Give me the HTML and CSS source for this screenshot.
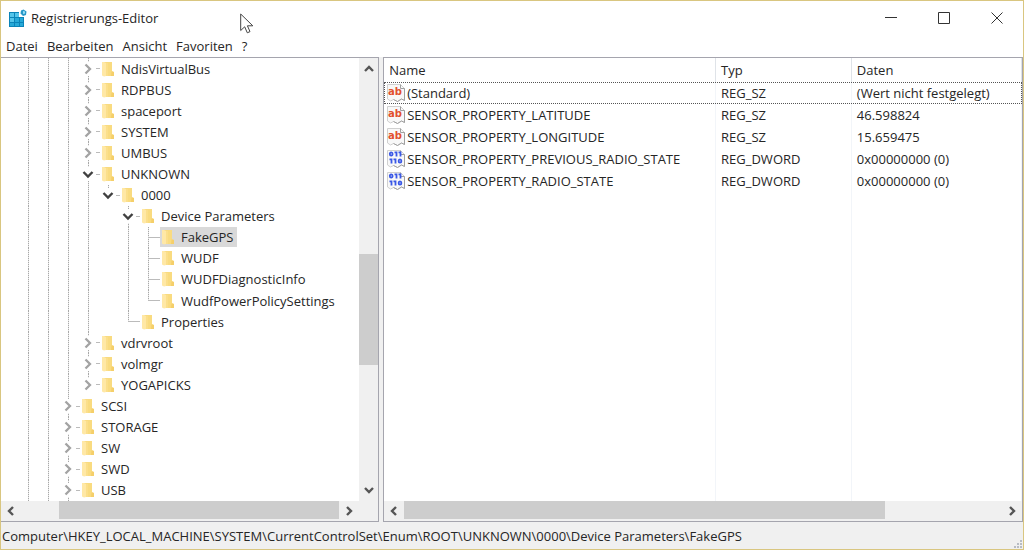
FILE: index.html
```html
<!DOCTYPE html>
<html lang="de">
<head>
<meta charset="utf-8">
<title>Registrierungs-Editor</title>
<meta name="viewport" content="width=device-width, initial-scale=1">
<link rel="stylesheet" href="styles.css">
</head>
<body>
<svg class="sprite" aria-hidden="true">
  <symbol id="folder" viewBox="0 0 12 16">
    <path d="M1 1h9v9l2 1v4H1z" fill="#f9db80"/>
    <path d="M0 1h2l2 1v13l-2 .5-2-1z" fill="#ffe8a6"/>
    <path d="M4 2h2v13H4z" fill="#fbdf8b"/>
    <path d="M9.500 10.500l2.500.500v4H9z" fill="#f5cf6a"/>
  </symbol>
  <symbol id="closed" viewBox="0 0 12 12">
    <path d="M3.500 1.500L8 6l-4.500 4.500" fill="none" stroke="#a3a3a3" stroke-width="2.300"/>
  </symbol>
  <symbol id="open" viewBox="0 0 12 12">
    <path d="M1.500 4L6 8.500 10.500 4" fill="none" stroke="#404040" stroke-width="2.400"/>
  </symbol>
  <symbol id="arrow" viewBox="0 0 12 12">
    <path d="M2 8l4-4 4 4" fill="none" stroke="#555" stroke-width="2.400"/>
  </symbol>
  <symbol id="page" viewBox="0 0 18 18">
    <path d="M.5.500h13l4 4v12l-3-1.500-4 2.500-4-2-3 1.500-3-2z" fill="#f8f8f8" stroke="#d0d0d0"/>
    <path d="M13.500.500v4h4M17.500 4.500v12l-3-1.500-4 2.500-4-2" fill="none" stroke="#a0a0a0"/>
  </symbol>
  <symbol id="bits" viewBox="0 0 18 18">
    <g fill="none" stroke="#3a58e6" stroke-width="1.800">
      <ellipse cx="4.200" cy="4" rx="1.400" ry="1.600"/>
      <path d="M7.500 2.400h2V6.500M11.500 2.400h2V6.500M2.500 9.400h2v4.100M6.500 9.400h2v4.100"/>
      <ellipse cx="13" cy="11" rx="1.400" ry="1.600"/>
    </g>
  </symbol>
</svg>

<div class="window">
  <header class="titlebar">
    <svg class="app-icon" viewBox="0 0 18 18" aria-hidden="true">
      <path d="M0 3h10v5h5v10H0z" fill="#0b84b8"/>
      <path d="M1 4h4v4H1zM6 4h4v4H6zM1 9h4v4H1z" fill="#55c5ea"/>
      <path d="M6 9h4v4H6zM11 9h3v4h-3zM1 14h4v3H1zM6 14h4v3H6zM11 14h3v3h-3z" fill="#27a9d8"/>
      <path d="M14.500.500l3 2-.500 3.500-3 1-2.500-2.500.5-3z" fill="#2799c9"/>
      <path d="M14 2l2 .5v2l-2 .5z" fill="#9adcf3"/>
    </svg>
    <h1 class="title">Registrierungs-Editor</h1>
    <button class="caption" aria-label="Minimieren"><svg viewBox="0 0 12 12"><path d="M0 5.500h12" /></svg></button>
    <button class="caption" aria-label="Maximieren"><svg viewBox="0 0 12 12"><path d="M.5.500h11v11H.5z" /></svg></button>
    <button class="caption" aria-label="Schließen"><svg viewBox="0 0 12 12"><path d="M.5.500l11 11M11.500.500l-11 11" /></svg></button>
  </header>

  <nav class="menubar">
    <button>Datei</button>
    <button>Bearbeiten</button>
    <button>Ansicht</button>
    <button>Favoriten</button>
    <button>?</button>
  </nav>

  <main class="panes">
    <section class="pane tree-pane" aria-label="Schlüssel">
      <ul class="tree">
        <li class="row"><i class="guide"></i><i class="guide"></i><i class="guide"></i><button class="twist mid" aria-label="Erweitern"><svg><use href="#closed"/></svg></button><span class="key"><svg><use href="#folder"/></svg>NdisVirtualBus</span></li>
        <li class="row"><i class="guide"></i><i class="guide"></i><i class="guide"></i><button class="twist mid" aria-label="Erweitern"><svg><use href="#closed"/></svg></button><span class="key"><svg><use href="#folder"/></svg>RDPBUS</span></li>
        <li class="row"><i class="guide"></i><i class="guide"></i><i class="guide"></i><button class="twist mid" aria-label="Erweitern"><svg><use href="#closed"/></svg></button><span class="key"><svg><use href="#folder"/></svg>spaceport</span></li>
        <li class="row"><i class="guide"></i><i class="guide"></i><i class="guide"></i><button class="twist mid" aria-label="Erweitern"><svg><use href="#closed"/></svg></button><span class="key"><svg><use href="#folder"/></svg>SYSTEM</span></li>
        <li class="row"><i class="guide"></i><i class="guide"></i><i class="guide"></i><button class="twist mid" aria-label="Erweitern"><svg><use href="#closed"/></svg></button><span class="key"><svg><use href="#folder"/></svg>UMBUS</span></li>
        <li class="row"><i class="guide"></i><i class="guide"></i><i class="guide"></i><button class="twist mid" aria-label="Reduzieren"><svg><use href="#open"/></svg></button><span class="key"><svg><use href="#folder"/></svg>UNKNOWN</span></li>
        <li class="row"><i class="guide"></i><i class="guide"></i><i class="guide"></i><i class="guide"></i><button class="twist last" aria-label="Reduzieren"><svg><use href="#open"/></svg></button><span class="key"><svg><use href="#folder"/></svg>0000</span></li>
        <li class="row"><i class="guide"></i><i class="guide"></i><i class="guide"></i><i class="guide"></i><i class="guide blank"></i><button class="twist mid" aria-label="Reduzieren"><svg><use href="#open"/></svg></button><span class="key"><svg><use href="#folder"/></svg>Device Parameters</span></li>
        <li class="row"><i class="guide"></i><i class="guide"></i><i class="guide"></i><i class="guide"></i><i class="guide blank"></i><i class="guide"></i><i class="leaf mid"></i><span class="key selected"><svg><use href="#folder"/></svg>FakeGPS</span></li>
        <li class="row"><i class="guide"></i><i class="guide"></i><i class="guide"></i><i class="guide"></i><i class="guide blank"></i><i class="guide"></i><i class="leaf mid"></i><span class="key"><svg><use href="#folder"/></svg>WUDF</span></li>
        <li class="row"><i class="guide"></i><i class="guide"></i><i class="guide"></i><i class="guide"></i><i class="guide blank"></i><i class="guide"></i><i class="leaf mid"></i><span class="key"><svg><use href="#folder"/></svg>WUDFDiagnosticInfo</span></li>
        <li class="row"><i class="guide"></i><i class="guide"></i><i class="guide"></i><i class="guide"></i><i class="guide blank"></i><i class="guide"></i><i class="leaf last"></i><span class="key"><svg><use href="#folder"/></svg>WudfPowerPolicySettings</span></li>
        <li class="row"><i class="guide"></i><i class="guide"></i><i class="guide"></i><i class="guide"></i><i class="guide blank"></i><i class="leaf last"></i><span class="key"><svg><use href="#folder"/></svg>Properties</span></li>
        <li class="row"><i class="guide"></i><i class="guide"></i><i class="guide"></i><button class="twist mid" aria-label="Erweitern"><svg><use href="#closed"/></svg></button><span class="key"><svg><use href="#folder"/></svg>vdrvroot</span></li>
        <li class="row"><i class="guide"></i><i class="guide"></i><i class="guide"></i><button class="twist mid" aria-label="Erweitern"><svg><use href="#closed"/></svg></button><span class="key"><svg><use href="#folder"/></svg>volmgr</span></li>
        <li class="row"><i class="guide"></i><i class="guide"></i><i class="guide"></i><button class="twist last" aria-label="Erweitern"><svg><use href="#closed"/></svg></button><span class="key"><svg><use href="#folder"/></svg>YOGAPICKS</span></li>
        <li class="row"><i class="guide"></i><i class="guide"></i><button class="twist mid" aria-label="Erweitern"><svg><use href="#closed"/></svg></button><span class="key"><svg><use href="#folder"/></svg>SCSI</span></li>
        <li class="row"><i class="guide"></i><i class="guide"></i><button class="twist mid" aria-label="Erweitern"><svg><use href="#closed"/></svg></button><span class="key"><svg><use href="#folder"/></svg>STORAGE</span></li>
        <li class="row"><i class="guide"></i><i class="guide"></i><button class="twist mid" aria-label="Erweitern"><svg><use href="#closed"/></svg></button><span class="key"><svg><use href="#folder"/></svg>SW</span></li>
        <li class="row"><i class="guide"></i><i class="guide"></i><button class="twist mid" aria-label="Erweitern"><svg><use href="#closed"/></svg></button><span class="key"><svg><use href="#folder"/></svg>SWD</span></li>
        <li class="row"><i class="guide"></i><i class="guide"></i><button class="twist mid" aria-label="Erweitern"><svg><use href="#closed"/></svg></button><span class="key"><svg><use href="#folder"/></svg>USB</span></li>
      </ul>
      <div class="scroll vertical">
        <button aria-label="Nach oben"><svg><use href="#arrow"/></svg></button>
        <div class="track"><span style="flex-grow:174"></span><span class="thumb" style="flex-grow:111"></span><span style="flex-grow:114"></span></div>
        <button class="down" aria-label="Nach unten"><svg><use href="#arrow"/></svg></button>
      </div>
      <div class="scroll horizontal">
        <button class="left" aria-label="Nach links"><svg><use href="#arrow"/></svg></button>
        <div class="track"><span style="flex-grow:38"></span><span class="thumb" style="flex-grow:279"></span></div>
        <button class="right" aria-label="Nach rechts"><svg><use href="#arrow"/></svg></button>
      </div>
      <div class="corner"></div>
    </section>

    <section class="pane list-pane" aria-label="Werte">
      <div class="list">
        <table class="values">
          <colgroup><col class="col-name"><col class="col-type"><col></colgroup>
          <thead>
            <tr><th>Name</th><th>Typ</th><th>Daten</th></tr>
          </thead>
          <tbody>
            <tr class="focused"><td><span class="value"><svg class="text-icon" viewBox="0 0 18 18"><use href="#page"/><text x="8" y="11">ab</text></svg>(Standard)</span></td><td>REG_SZ</td><td>(Wert nicht festgelegt)</td></tr>
            <tr><td><span class="value"><svg class="text-icon" viewBox="0 0 18 18"><use href="#page"/><text x="8" y="11">ab</text></svg>SENSOR_PROPERTY_LATITUDE</span></td><td>REG_SZ</td><td>46.598824</td></tr>
            <tr><td><span class="value"><svg class="text-icon" viewBox="0 0 18 18"><use href="#page"/><text x="8" y="11">ab</text></svg>SENSOR_PROPERTY_LONGITUDE</span></td><td>REG_SZ</td><td>15.659475</td></tr>
            <tr><td><span class="value"><svg viewBox="0 0 18 18"><use href="#page"/><use href="#bits"/></svg>SENSOR_PROPERTY_PREVIOUS_RADIO_STATE</span></td><td>REG_DWORD</td><td>0x00000000 (0)</td></tr>
            <tr><td><span class="value"><svg viewBox="0 0 18 18"><use href="#page"/><use href="#bits"/></svg>SENSOR_PROPERTY_RADIO_STATE</span></td><td>REG_DWORD</td><td>0x00000000 (0)</td></tr>
            <tr class="filler"><td></td><td></td><td></td></tr>
          </tbody>
        </table>
      </div>
      <div class="scroll horizontal">
        <button class="left" aria-label="Nach links"><svg><use href="#arrow"/></svg></button>
        <div class="track"><span class="thumb" style="flex-grow:481"></span><span style="flex-grow:117"></span></div>
        <button class="right" aria-label="Nach rechts"><svg><use href="#arrow"/></svg></button>
      </div>
    </section>
  </main>

  <footer class="status">
    <span>Computer\HKEY_LOCAL_MACHINE\SYSTEM\CurrentControlSet\Enum\ROOT\UNKNOWN\0000\Device Parameters\FakeGPS</span>
    <svg class="grip" viewBox="0 0 9 9" aria-hidden="true"><path d="M6 0h2v2H6zM3 3h2v2H3zM6 3h2v2H6zM0 6h2v2H0zM3 6h2v2H3zM6 6h2v2H6z" fill="#b8bcc4"/></svg>
  </footer>

  <svg class="pointer" viewBox="0 0 14 21" aria-hidden="true"><path d="M.7 1v16.500l4-3.700 2.600 6 2.700-1.200-2.600-5.800h5.400z" fill="#fff" stroke="#444"/></svg>
</div>
</body>
</html>
```
FILE: styles.css
```css
* {
  box-sizing: border-box;
}

body {
  margin: 0;
  font: 13px/20px "Open Sans", "Noto Sans", sans-serif;
  color: #262626;
}

button {
  padding: 0;
  border: 0;
  background: none;
  font: inherit;
  color: inherit;
}

svg {
  display: block;
  flex: none;
}

.sprite {
  position: absolute;
  width: 0;
  height: 0;
}

.window {
  position: relative;
  display: flex;
  flex-direction: column;
  height: 100vh;
  border: 1px solid #d9c680;
  background: #fff;
}

/* Title bar and menu */
.titlebar {
  display: flex;
  align-items: center;
  height: 34px;
  padding-left: 8px;
}

.app-icon {
  width: 18px;
  height: 18px;
}

.title {
  flex: 1;
  margin: 0 0 0 4px;
  font-size: 13px;
  font-weight: 400;
}

.caption {
  display: grid;
  place-items: center;
  width: 53px;
  height: 32px;
}

.caption svg {
  width: 12px;
  height: 12px;
  fill: none;
  stroke: #333;
}

.menubar {
  display: flex;
  gap: 9px;
  height: 22px;
  padding-left: 5px;
}

/* Panes */
.panes {
  display: grid;
  grid-template-columns: 37% 1fr;
  gap: 4px;
  flex: 1;
  min-height: 0;
  background: #f0f0f0;
}

.pane {
  display: grid;
  grid-template-rows: 1fr 20px;
  min-width: 0;
  min-height: 0;
  border: 1px solid #a5a5ae;
  background: #fff;
}

.tree-pane {
  grid-template-columns: 1fr 19px;
  border-left: 0;
}

.tree {
  display: grid;
  grid-auto-rows: 1fr;
  margin: 0;
  padding: 0 0 0 17px;
  list-style: none;
  overflow: hidden;
}

.row {
  display: flex;
  align-items: center;
  min-height: 20px;
  white-space: nowrap;
}

.guide,
.leaf,
.twist {
  --dots: repeating-linear-gradient(#a8a8a8 0 1px, #e8e8e8 1px 2px);
  flex: none;
  align-self: stretch;
  width: 20px;
  background: var(--dots) 10px 0 / 1px 100% no-repeat;
}

.guide.blank {
  background: none;
}

.twist {
  display: flex;
  align-items: center;
  width: 22px;
  padding-left: 4px;
  background:
    linear-gradient(#bbb, #bbb) 18px 50% / 4px 1px no-repeat,
    var(--dots) 10px 0 / 1px 100% no-repeat;
}

.twist.last {
  background:
    linear-gradient(#bbb, #bbb) 18px 50% / 4px 1px no-repeat,
    var(--dots) 10px 0 / 1px 50% no-repeat;
}

.twist svg {
  width: 12px;
  height: 14px;
  background: #fff;
}

.leaf {
  width: 22px;
  background:
    linear-gradient(#bbb, #bbb) 10px 50% / 12px 1px no-repeat,
    var(--dots) 10px 0 / 1px 100% no-repeat;
}

.leaf.last {
  background:
    linear-gradient(#bbb, #bbb) 10px 50% / 12px 1px no-repeat,
    var(--dots) 10px 0 / 1px 50% no-repeat;
}

.key {
  display: flex;
  align-items: center;
  gap: 7px;
  padding: 0 4px 0 2px;
}

.key svg {
  width: 12px;
  height: 16px;
}

.selected {
  background: #d9d9d9;
}

/* Scroll bars */
.scroll,
.track {
  display: flex;
  background: #f0f0f0;
}

.scroll button {
  display: grid;
  place-items: center;
  flex: none;
  width: 20px;
  height: 20px;
}

.scroll svg {
  width: 12px;
  height: 12px;
}

.scroll.vertical {
  flex-direction: column;
}

.vertical button {
  width: 19px;
  height: 22px;
}

.track {
  flex: 1;
}

.vertical .track {
  flex-direction: column;
}

.thumb {
  background: #cdcdcd;
}

.horizontal .thumb {
  height: 18px;
}

.down svg {
  transform: rotate(180deg);
}

.left svg {
  transform: rotate(-90deg);
}

.right svg {
  transform: rotate(90deg);
}

.corner {
  background: #f0f0f0;
}

/* Value list */
.list {
  min-height: 0;
  overflow: hidden;
}

.values {
  width: 100%;
  height: 100%;
  border-collapse: collapse;
  table-layout: fixed;
}

.col-name {
  width: 52%;
}

.col-type {
  width: 21.3%;
}

.values th,
.values td {
  height: 22px;
  padding: 0 0 0 5px;
  border-right: 1px solid #f2f5f9;
  font-weight: 400;
  text-align: left;
  white-space: nowrap;
}

.values th {
  height: 24px;
  border-right-color: #dfe3e8;
}

.values td:first-child {
  padding-left: 3px;
}

.values .filler td {
  height: auto;
}

.focused {
  outline: 1px dotted #555;
  outline-offset: -1px;
}

.value {
  display: flex;
  align-items: center;
  gap: 2px;
}

.value svg {
  width: 18px;
  height: 18px;
  overflow: visible;
}

.text-icon text {
  font: bold 10px "DejaVu Sans", sans-serif;
  text-anchor: middle;
  fill: #e2502f;
}

/* Status bar */
.status {
  display: flex;
  align-items: center;
  justify-content: space-between;
  height: 27px;
  padding-left: 1px;
  background: #f0f0f0;
}

.grip {
  align-self: flex-end;
  width: 9px;
  height: 9px;
}

.pointer {
  position: absolute;
  top: 12px;
  left: 239px;
  width: 14px;
  height: 21px;
}
```
